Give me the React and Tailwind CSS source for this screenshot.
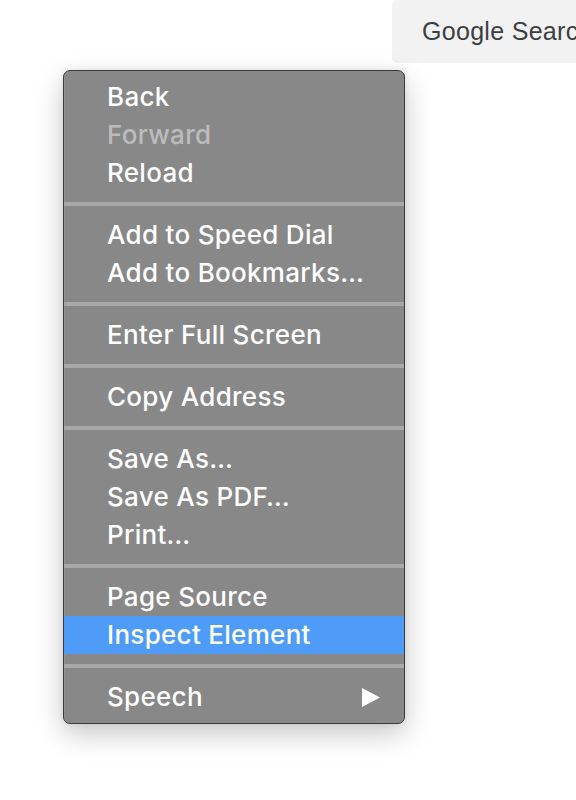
import React from "react";

const groups = [
  [{ label: "Back" }, { label: "Forward", disabled: true }, { label: "Reload" }],
  [{ label: "Add to Speed Dial" }, { label: "Add to Bookmarks…" }],
  [{ label: "Enter Full Screen" }],
  [{ label: "Copy Address" }],
  [{ label: "Save As…" }, { label: "Save As PDF…" }, { label: "Print…" }],
  [{ label: "Page Source" }, { label: "Inspect Element", active: true }],
  [{ label: "Speech", submenu: true }],
];

function MenuItem({ item }) {
  const color = item.disabled ? "text-[#bcbcbc]" : "text-white";
  return (
    <div
      className={`flex h-[38px] items-center justify-between pl-[43px] pr-[24px] ${
        item.active ? "bg-[#4e9cf8]" : ""
      }`}
    >
      <span className={`text-[26px] font-medium leading-none tracking-[0.3px] ${color}`}>
        {item.label}
      </span>
      {item.submenu && (
        <svg width="18" height="19" viewBox="0 0 18 19">
          <path d="M0 0 L18 9.5 L0 19 Z" fill="#ffffff" />
        </svg>
      )}
    </div>
  );
}

export default function App() {
  return (
    <div className="relative h-[800px] w-[576px] overflow-hidden bg-white">
      {/* search button peeking in at the top right */}
      <div className="flex">
        <div className="ml-[392px] flex h-[63px] w-[220px] shrink-0 items-center rounded-[5px] bg-[#f2f2f2] pl-[30px]">
          <span className="whitespace-nowrap font-['Arial','Liberation_Sans',sans-serif] text-[25px] tracking-[0.3px] text-[#3c4043]">
            Google Search
          </span>
        </div>
      </div>

      {/* context menu */}
      <div
        className="absolute left-[63px] top-[70px] w-[342px] rounded-[7px] border border-[#3b3b3b] bg-[#888888] py-[7px] shadow-[0_10px_28px_rgba(0,0,0,0.22),0_0_6px_rgba(0,0,0,0.08),inset_1px_0_0_rgba(255,255,255,0.08)]"
        style={{ fontFamily: "Inter, 'Noto Sans', sans-serif" }}
      >
        {groups.map((group, gi) => (
          <div key={gi}>
            {gi > 0 && (
              <div className="py-[10px]">
                <div className="h-[4px] bg-[#a8a8a8]" />
              </div>
            )}
            {group.map((item) => (
              <MenuItem key={item.label} item={item} />
            ))}
          </div>
        ))}
      </div>
    </div>
  );
}
